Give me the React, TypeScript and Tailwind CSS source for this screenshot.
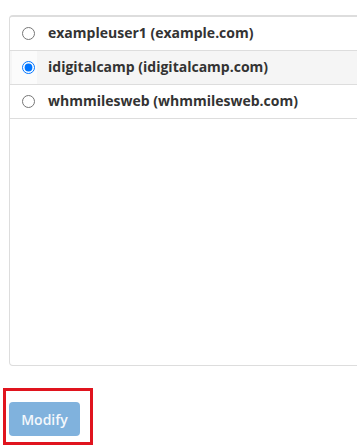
const accounts = [
  { user: 'exampleuser1', domain: 'example.com' },
  { user: 'idigitalcamp', domain: 'idigitalcamp.com' },
  { user: 'whmmilesweb', domain: 'whmmilesweb.com' },
];

export default function App() {
  const selected = 1;
  return (
    <div className="w-[357px] h-[445px] overflow-hidden bg-white font-['Open_Sans',sans-serif] text-[#333]">
      <div className="pt-[15px] pl-[9px] -mr-[10px]">
        <div className="h-[351px] rounded-[4px] border border-[#ddd] border-t-2 overflow-hidden">
          {accounts.map((a, i) => (
            <div
              key={a.user}
              className={`flex h-[34px] border-b border-[#ddd] ${i === selected ? 'bg-[#f5f5f5]' : 'bg-white'}`}
            >
              <div className={`w-[25px] ml-[2px] flex items-center justify-center ${i === selected ? 'bg-[#fbfbfb]' : ''}`}>
                <input type="radio" name="acct" defaultChecked={i === selected} className="w-[13px] h-[13px] m-0 ml-[8px]" />
              </div>
              <div className="flex items-center pl-[11px] pb-[2px] text-[14px] font-bold">
                {a.user} ({a.domain})
              </div>
            </div>
          ))}
        </div>
      </div>
      <div className="mt-[22px] ml-[3px] w-[90px] h-[57px] border-[3px] border-[#e0141e] pt-[11px] pl-[3px]">
        <button
          disabled
          className="w-[71px] h-[34px] rounded-[4px] bg-[#80b2dd] text-[#f4f8fc] text-[14px] font-semibold font-['Open_Sans',sans-serif]"
        >
          Modify
        </button>
      </div>
    </div>
  );
}
